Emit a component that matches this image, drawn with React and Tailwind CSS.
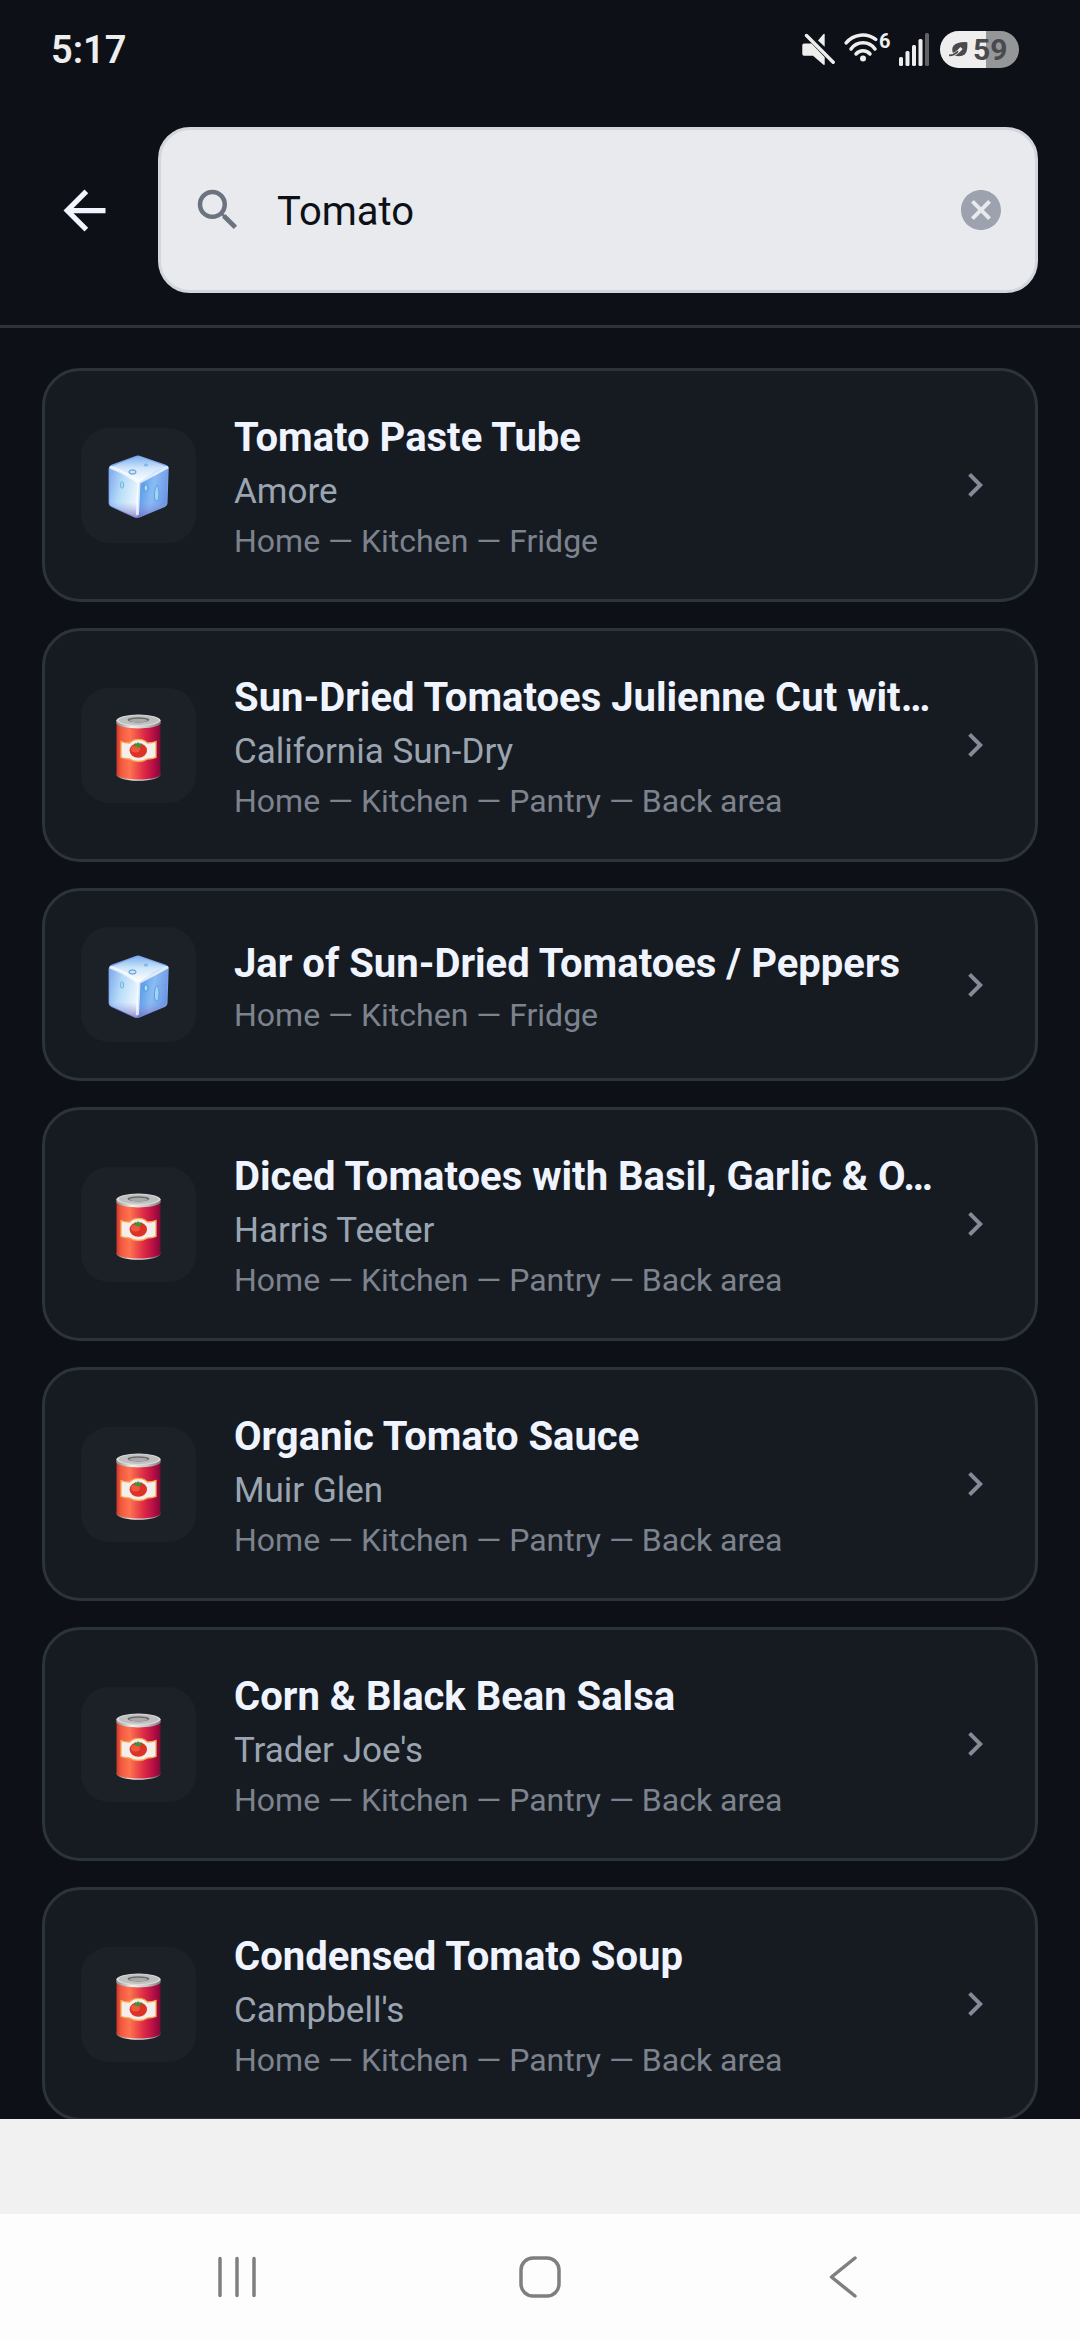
import { useState } from "react";
import { MdArrowBack, MdCancel, MdChevronRight, MdSearch } from "react-icons/md";

const FRIDGE = "Home — Kitchen — Fridge";
const PANTRY = "Home — Kitchen — Pantry — Back area";

const ITEMS = [
  { id: 1, name: "Tomato Paste Tube", brand: "Amore", location: FRIDGE, icon: "ice" },
  {
    id: 2,
    name: "Sun-Dried Tomatoes Julienne Cut wit…",
    brand: "California Sun-Dry",
    location: PANTRY,
    icon: "can",
  },
  { id: 3, name: "Jar of Sun-Dried Tomatoes / Peppers", location: FRIDGE, icon: "ice" },
  {
    id: 4,
    name: "Diced Tomatoes with Basil, Garlic & O…",
    brand: "Harris Teeter",
    location: PANTRY,
    icon: "can",
  },
  { id: 5, name: "Organic Tomato Sauce", brand: "Muir Glen", location: PANTRY, icon: "can" },
  { id: 6, name: "Corn & Black Bean Salsa", brand: "Trader Joe's", location: PANTRY, icon: "can" },
  { id: 7, name: "Condensed Tomato Soup", brand: "Campbell's", location: PANTRY, icon: "can" },
];

const IceIcon = () => (
  <svg viewBox="0 0 61 64" className="w-[61px] h-16" aria-hidden="true">
    <defs>
      <linearGradient id="iceTop" x1="0" y1="0" x2="0" y2="1">
        <stop offset="0" stopColor="#7fb2ee" />
        <stop offset="0.45" stopColor="#cfe6fb" />
        <stop offset="1" stopColor="#ffffff" />
      </linearGradient>
      <linearGradient id="iceLeft" x1="0" y1="0.2" x2="1" y2="0.6">
        <stop offset="0" stopColor="#86aef0" />
        <stop offset="0.4" stopColor="#b5dcf8" />
        <stop offset="1" stopColor="#f2f8ff" />
      </linearGradient>
      <linearGradient id="iceRight" x1="0" y1="0.3" x2="1" y2="0.6">
        <stop offset="0" stopColor="#4f93e6" />
        <stop offset="0.5" stopColor="#8abcf3" />
        <stop offset="1" stopColor="#6a94e6" />
      </linearGradient>
      <linearGradient id="iceShade" x1="0" y1="0" x2="0" y2="1">
        <stop offset="0.55" stopColor="#8f8be0" stopOpacity="0" />
        <stop offset="1" stopColor="#6b62b8" stopOpacity="0.75" />
      </linearGradient>
    </defs>
    <path
      d="M27 1.2q3-1.2 6 0l25 8.6q2.800 1 2.700 4L59.500 48q0 2.500-2.300 3.800L32 62.300q-3 1.400-6 0L3 51.800Q.6 50.500.6 48V14q0-3 2.700-4.200z"
      fill="#7ba6ea"
    />
    <path d="M28 2q2-.8 4.500 0L59 11.500Q45 17 31 27.500 15 17 2 12z" fill="url(#iceTop)" />
    <path d="M1.500 13Q16 18 31 27.500L29.500 62q-2 .2-3.500-.6L3.500 51q-2-1-2-3.500z" fill="url(#iceLeft)" />
    <path d="M59.800 12.500Q45 18 31 27.500L29.500 62q2 .1 3.500-.6l23.500-10.600q2-1 2.200-3z" fill="url(#iceRight)" />
    <path
      d="M.6 28 31 40l29.300-12-.8 20q0 2.500-2.300 3.800L32 62.300q-3 1.400-6 0L3 51.800Q.6 50.500.6 48z"
      fill="url(#iceShade)"
    />
    <path d="M3 12.500Q18 18 31 27.500L59 12.500M31 27.500 29.500 59" stroke="#fff" strokeWidth="3" strokeOpacity="0.75" fill="none" strokeLinecap="round" />
    <ellipse cx="24.500" cy="17" rx="3.600" ry="2.100" fill="#c5e6fa" stroke="#4d93cf" strokeWidth="1" />
    <ellipse cx="38" cy="10" rx="1.700" ry="1" fill="#a9d3f5" stroke="#5c9fd8" strokeWidth="0.700" />
    <ellipse cx="14" cy="30" rx="1.700" ry="3.200" fill="#a9dcf4" stroke="#62a9dc" strokeWidth="0.800" />
    <ellipse cx="38" cy="33" rx="2" ry="3.200" fill="#a6ddfa" stroke="#3f86d6" strokeWidth="0.800" />
    <path d="M49.500 30q2.500 7 1 14-1 3-3 1.500-1.500-3-1-8 .5-6 3-7.500z" fill="#9fd6f6" stroke="#5598dc" strokeWidth="0.800" />
  </svg>
);

const CanIcon = () => (
  <svg viewBox="0 0 45 67" className="w-[45px] h-[67px]" aria-hidden="true">
    <defs>
      <linearGradient id="canBody" x1="0" x2="1">
        <stop offset="0" stopColor="#c9362c" />
        <stop offset="0.1" stopColor="#f2583f" />
        <stop offset="0.3" stopColor="#ff7350" />
        <stop offset="0.62" stopColor="#dd2b45" />
        <stop offset="0.85" stopColor="#b50d45" />
        <stop offset="1" stopColor="#7d0a35" />
      </linearGradient>
      <linearGradient id="canRim" x1="0" x2="1">
        <stop offset="0" stopColor="#8b8b8b" />
        <stop offset="0.35" stopColor="#f1f1f1" />
        <stop offset="0.7" stopColor="#c4c4c4" />
        <stop offset="1" stopColor="#777777" />
      </linearGradient>
    </defs>
    <path d="M.8 59v2.500c4 7 39 7 43.400 0V59z" fill="url(#canRim)" />
    <path d="M.5 8h44v53c-5 6-39 6-44 0z" fill="url(#canBody)" />
    <path d="M.3 6h44.400v3.500c-5 6.500-39.400 6.500-44.400 0z" fill="url(#canRim)" />
    <ellipse cx="22.500" cy="6.300" rx="22" ry="5.800" fill="#d9d9d9" />
    <ellipse cx="22.500" cy="6.300" rx="20" ry="4.700" fill="#bfbfbf" />
    <ellipse cx="22.500" cy="5.800" rx="11" ry="2.600" fill="#6c6c6c" />
    <ellipse cx="22.500" cy="6.500" rx="9" ry="1.700" fill="#a9a9a9" />
    <path
      d="M5 27.500q4 1.500 8.500 1.500 3.500-3.700 9-3.700t9 3.700q4.500 0 8.500-1.500v16q-4 1.500-8.500 1.500-3.500 2.500-9 2.500t-9-2.500q-4.500 0-8.500-1.500z"
      fill="#f4efec"
      stroke="#f9a544"
      strokeWidth="1.300"
    />
    <ellipse cx="22.300" cy="36.500" rx="8.700" ry="7.300" fill="#dd3226" />
    <ellipse cx="19.500" cy="35" rx="4.500" ry="3.500" fill="#f2573d" />
    <path d="m22 27.500 1.200 2.700 2.700-1-1 2 2 1-3 .3-1.700 1.600-1.600-1.600-3.200-.2 2.200-1.300-1-2 2.500.9z" fill="#2e9b35" />
  </svg>
);

const MuteIcon = () => (
  <svg viewBox="0 0 33 33" className="size-[33px]" fill="#eeeeee" aria-hidden="true">
    <path d="M16 7.500 21.500 1q1.200-.8 1.200.8v12z" />
    <path d="M2 10.500h7.500l13.200 13.700v6.800q0 1.500-1.200.7L11 22.800H2q-1.700 0-1.700-1.700v-8.900q0-1.700 1.700-1.700z" />
    <path d="m4.500 2.500 26.700 26.700" stroke="#eeeeee" strokeWidth="3.400" strokeLinecap="round" />
  </svg>
);

const WifiIcon = () => (
  <svg viewBox="0 0 36 33" className="w-9 h-[33px]" fill="none" stroke="#eeeeee" strokeWidth="3.500" strokeLinecap="round" aria-hidden="true">
    <path d="M2.200 9.800a21.600 21.600 0 0 1 29.500-3.400" />
    <path d="M7 16a14.600 14.600 0 0 1 24 0" />
    <path d="M12 21a9.400 9.400 0 0 1 14 0" />
    <circle cx="19" cy="25.500" r="3" fill="#eeeeee" stroke="none" />
  </svg>
);

const SignalIcon = () => (
  <svg viewBox="0 0 32 33" className="w-8 h-[33px]" fill="#eeeeee" aria-hidden="true">
    <rect x="0" y="24" width="4" height="9" rx="1.500" />
    <rect x="6.500" y="18" width="4" height="15" rx="1.500" />
    <rect x="13" y="12" width="4" height="21" rx="1.500" />
    <rect x="19.500" y="6" width="4" height="27" rx="1.500" />
    <rect x="26" y="0" width="4" height="33" rx="1.500" fill="#606266" />
  </svg>
);

const LeafIcon = () => (
  <svg viewBox="0 0 19 15" className="w-[19px] h-[15px]" aria-hidden="true">
    <path d="M18.300.2q.6 9-2.500 12-3.500 3.300-10.300 1.400Q1.500 8 4.500 3.800 8.500-.5 18.300.2z" fill="#4a4a4e" />
    <path d="M.5 13.300Q7 13 12.500 6" stroke="#eeeeee" strokeWidth="3" fill="none" />
    <path d="M.5 13.300Q5 13.200 8.500 9.800" stroke="#4a4a4e" strokeWidth="1.800" strokeLinecap="round" fill="none" />
  </svg>
);

const StatusBar = () => (
  <div className="flex items-center justify-between h-[95px] pt-1 pl-[51px] pr-[61px] shrink-0">
    <span className="text-[38px] leading-none font-semibold text-[#eeeeee]">5:17</span>
    <div className="flex items-center">
      <MuteIcon />
      <div className="flex items-start ml-[9px]">
        <WifiIcon />
        <span className="w-3 -ml-px text-[20px] leading-4 font-bold text-[#eeeeee]">6</span>
      </div>
      <div className="ml-2">
        <SignalIcon />
      </div>
      <div className="flex items-center w-[79px] h-[37px] ml-[9px] pl-[9px] gap-[5px] rounded-full bg-linear-to-r from-[#eeeeee] from-58% to-[#959698] to-58%">
        <LeafIcon />
        <span className="text-[30px] leading-none font-bold text-[#4a4a4e]">59</span>
      </div>
    </div>
  </div>
);

const ItemRow = ({ item }) => (
  <li>
    <button
      type="button"
      className="flex items-center w-full rounded-[38px] border-3 border-[#2d333b] bg-[#161b22] p-9 text-left"
    >
      <span className="flex items-center justify-center size-[115px] pt-1 shrink-0 rounded-[28px] bg-[#1c2128]">
        {item.icon === "ice" ? <IceIcon /> : <CanIcon />}
      </span>
      <span className="flex flex-col flex-1 min-w-0 gap-1 ml-[38px] pt-1">
        <span className="truncate text-[40px] leading-[53px] font-bold text-[#f0f4ff]">
          {item.name}
        </span>
        {item.brand && (
          <span className="truncate text-[35px] leading-[48px] text-[#9aa5b1]">{item.brand}</span>
        )}
        <span className="truncate text-[32px] leading-[43px] text-[#7d838e]">{item.location}</span>
      </span>
      <MdChevronRight className="size-12 ml-1 shrink-0 text-[#848b98]" />
    </button>
  </li>
);

const NavBar = () => (
  <nav className="flex items-center justify-around h-[126px] px-[86px] shrink-0 bg-[#fdfdfd] text-[#7f7f7f]">
    <button type="button" aria-label="Recent apps">
      <svg viewBox="0 0 42 42" className="size-[42px]" stroke="currentColor" strokeWidth="3.500" strokeLinecap="round">
        <path d="M4 2.500v37M21 2.500v37M38 2.500v37" />
      </svg>
    </button>
    <button type="button" aria-label="Home">
      <svg viewBox="0 0 42 42" className="size-[42px]" fill="none" stroke="currentColor" strokeWidth="3.500">
        <rect x="2" y="2" width="38" height="38" rx="12" />
      </svg>
    </button>
    <button type="button" aria-label="Back">
      <svg viewBox="0 0 42 42" className="size-[42px]" fill="none" stroke="currentColor" strokeWidth="3.500" strokeLinecap="round" strokeLinejoin="round">
        <path d="M33 2 9.500 21 33 40" />
      </svg>
    </button>
  </nav>
);

export default function App() {
  const [query, setQuery] = useState("Tomato");

  return (
    <div className="flex flex-col h-screen bg-[#0d1117] font-[Roboto,sans-serif]">
      <StatusBar />

      <header className="flex items-center gap-8 px-[42px] py-8 shrink-0 border-b-3 border-[#2d333b]">
        <button type="button" aria-label="Go back" className="flex justify-center w-[84px] shrink-0 text-[#f0f4ff]">
          <MdArrowBack className="size-[63px]" />
        </button>
        <div className="flex items-center flex-1 min-w-0 h-[166px] px-[30px] rounded-[32px] border-3 border-[#d3d6dd] bg-[#e8eaed]">
          <MdSearch className="size-[54px] shrink-0 text-[#6b7280]" />
          <input
            type="text"
            aria-label="Search items"
            value={query}
            onChange={(e) => setQuery(e.target.value)}
            className="flex-1 min-w-0 ml-8 pt-[3px] bg-transparent text-[40px] text-[#0d1117] outline-none"
          />
          <button type="button" aria-label="Clear search" onClick={() => setQuery("")}>
            <MdCancel className="size-12 text-[#9ca3af]" />
          </button>
        </div>
      </header>

      <main className="flex-1 min-h-0 overflow-hidden px-[42px] pt-10">
        <ul className="flex flex-col gap-[26px]">
          {ITEMS.map((item) => (
            <ItemRow key={item.id} item={item} />
          ))}
        </ul>
      </main>

      <div className="h-[95px] shrink-0 bg-[#f1f1f1]" />
      <NavBar />
    </div>
  );
}
